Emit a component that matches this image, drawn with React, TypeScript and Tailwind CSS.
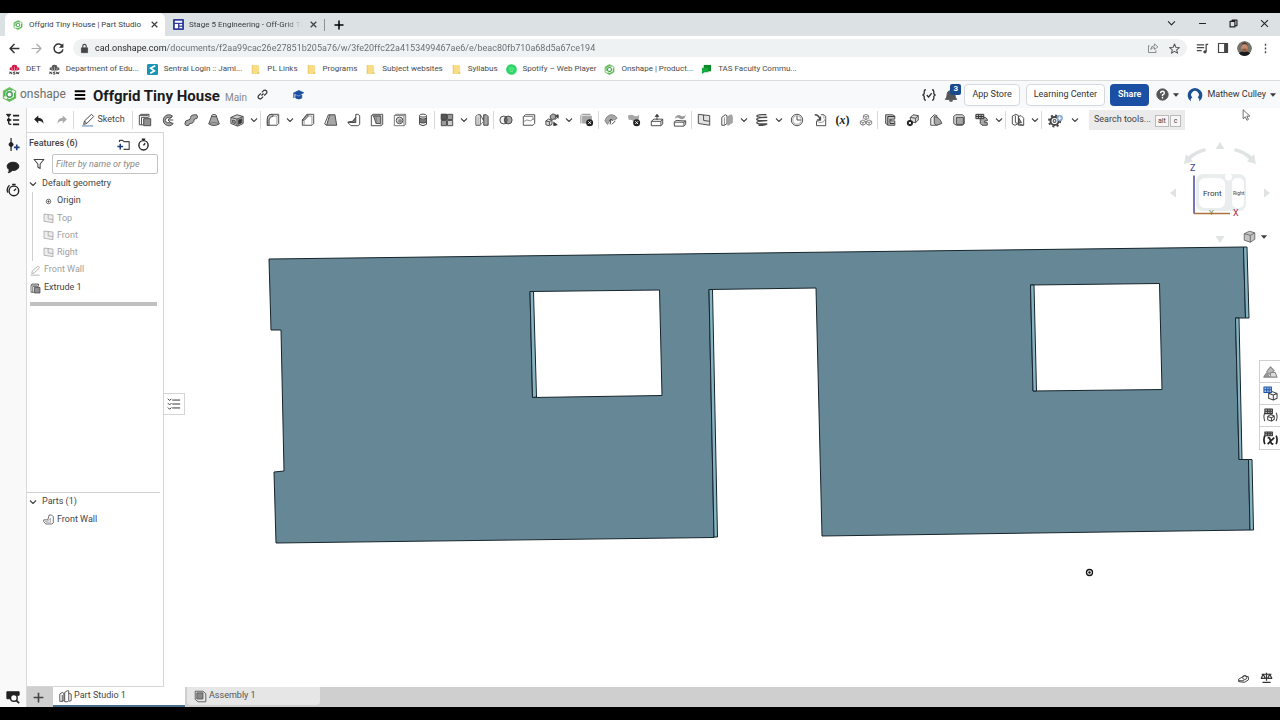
import { Fragment, useState } from "react";
import type { ReactNode } from "react";

interface IconProps {
  children: ReactNode;
  className?: string;
}

const Icon = ({ children, className = "size-[14px]" }: IconProps) => (
  <svg
    viewBox="0 0 16 16"
    className={`shrink-0 ${className}`}
    fill="none"
    stroke="currentColor"
    strokeWidth="1.1"
    strokeLinejoin="round"
    aria-hidden="true"
  >
    {children}
  </svg>
);

const Chevron = () => (
  <Icon className="size-2">
    <path d="M2 5l6 6 6-6" strokeWidth="2.2" />
  </Icon>
);

const Caret = () => (
  <Icon className="size-[6px]">
    <path d="M1 4h14l-7 8z" fill="currentColor" />
  </Icon>
);

const OnshapeMark = ({ className }: { className: string }) => (
  <svg viewBox="0 0 16 16" className={`shrink-0 ${className}`} fill="none" aria-hidden="true">
    <path d="M3 10V5l5-3 3 1.6M5 12.6l3 1.6 5.6-3V6" stroke="#4fb54a" strokeWidth="1.7" />
    <path d="M1.5 12V4.3L8 .8l6.5 3.500v7.400L8 15.300z" stroke="#6cc25f" strokeWidth="1.2" />
    <circle cx="8" cy="8" r="2.9" stroke="#3f9c4a" strokeWidth="1.5" />
  </svg>
);

const NswMark = ({ color }: { color: string }) => (
  <svg viewBox="0 0 12 12" className="size-[11px] shrink-0" aria-hidden="true">
    <path d="M.5 6Q.5 3 3 3.500 3 .8 6 .8t3 2.700q2.500-.5 2.500 2.500L9 7.200H3z" fill={color} />
    <path d="M3.500 6.500L3 4M6 6.500V3M8.500 6.500L9 4" stroke="#fff" strokeWidth=".5" />
    <path d="M1 11V8.500l2 2.500V8.500M6.800 8.700H5v1h1.500V11H4.500M8 8.500l.7 2.500.8-2 .7 2 .8-2.500" fill="none" stroke="#333" strokeWidth=".9" />
  </svg>
);

const FolderMark = () => (
  <svg viewBox="0 0 12 12" className="size-[11px] shrink-0" aria-hidden="true">
    <path d="M2 1h7l1 2v8H2z" fill="#f8dc86" />
    <path d="M2 1h1v10H2zM8 9h2v2H8z" fill="#e9c766" />
  </svg>
);

const bookmarks: { label: string; icon: ReactNode }[] = [
  { label: "DET", icon: <NswMark color="#d21447" /> },
  { label: "Department of Edu...", icon: <NswMark color="#555" /> },
  {
    label: "Sentral Login :: Jami...",
    icon: (
      <svg viewBox="0 0 12 12" className="size-[11px] shrink-0" aria-hidden="true">
        <rect width="12" height="12" rx="1.5" fill="#1b93b4" />
        <path d="M9 2L4 4.500 8 7.500 3.500 10" fill="none" stroke="#fff" strokeWidth="1.8" />
      </svg>
    ),
  },
  { label: "PL Links", icon: <FolderMark /> },
  { label: "Programs", icon: <FolderMark /> },
  { label: "Subject websites", icon: <FolderMark /> },
  { label: "Syllabus", icon: <FolderMark /> },
  {
    label: "Spotify – Web Player",
    icon: (
      <svg viewBox="0 0 12 12" className="size-[11px] shrink-0" aria-hidden="true">
        <circle cx="6" cy="6" r="5.8" fill="#2bd566" />
        <path d="M3 4.500q3-1 6 .5M3.500 6.500q2.500-.8 5 .4M4 8.300q2-.5 4 .4" fill="none" stroke="#8aeea9" strokeWidth=".8" />
      </svg>
    ),
  },
  { label: "Onshape | Product...", icon: <OnshapeMark className="size-[11px]" /> },
  {
    label: "TAS Faculty Commu...",
    icon: (
      <svg viewBox="0 0 12 12" className="size-[11px] shrink-0" aria-hidden="true">
        <path d="M3 1h8v7H3z" fill="#0b8a2c" />
        <path d="M1 4h7v5H4l-3 2z" fill="#14a83e" />
      </svg>
    ),
  },
];

const G = "#a6a6a6";

const toolIcons: Record<string, ReactNode> = {
  Extrude: (
    <>
      <path d="M1.500 3L3 1.500h9.500V5M1.500 3v10.500H6M1.500 3h9.500l1.500-1.500M4 5v8.500M4 5h8" />
      <path d="M6.500 6.500h8v8h-8z" fill="#8f8f8f" />
    </>
  ),
  Revolve: (
    <>
      <path d="M13 3.500A6.300 6.300 0 1 0 14 12l-4-1.500a3 3 0 1 1 0-4.500z" fill={G} />
      <path d="M8 8h6M8 8l5-4M8 8l4 4" />
    </>
  ),
  Sweep: (
    <path d="M1 12.500Q1 8 5 8q2.500 0 2.500-3Q7.500 2 13 2h1.500l1 2.500-1 2q-3-.5-3 1.500 0 4-5 4l-1 2-3 .5z" fill={G} />
  ),
  Loft: (
    <>
      <path d="M5.500 3L2 12.500Q8 16 14 12.500L10.500 3z" fill={G} />
      <ellipse cx="8" cy="3" rx="2.5" ry="1.3" fill="#ddd" />
      <path d="M2 12q6-2.500 12 0" stroke="#777" />
    </>
  ),
  Thicken: (
    <>
      <path d="M1 5l7-3 7 2v8l-6 3-8-3z" fill="#ccc" />
      <path d="M1 5l7 2 7-3M8 7v8" />
      <path d="M9.500 8l4-1.500V11l-4 2z" fill="#333" />
      <path d="M3 8l3 1v3l-3-1z" fill={G} />
    </>
  ),
  Fillet: (
    <>
      <path d="M1.500 14V7q0-5.500 5.500-5.500h7.500V12l-2 2z" />
      <path d="M1.500 7q0-5.500 5.500-5.500l1.500 2Q4 4 3.500 8V14h-2z" fill="#c4c4c4" />
      <path d="M8.500 3.500h4V14M12.500 3.500l2-2" stroke="#999" />
    </>
  ),
  Chamfer: (
    <>
      <path d="M1.500 14V8L7 1.500h7.500V12l-2 2z" />
      <path d="M1.500 8L7 1.500l1.500 2-5 5z" fill={G} />
      <path d="M3.500 8.500V14M8.500 3.500h4V14" stroke="#999" />
    </>
  ),
  Draft: (
    <>
      <path d="M6.500 2h6l2 12H3z" fill={G} />
      <path d="M3 14L.8 12.500 5 2h1.500" />
    </>
  ),
  Rib: (
    <>
      <path d="M10 1.500h2.500L14.500 3v10l-2 1.500h-8L1 11l5-1 4-4.500z" />
      <path d="M1 10.500l5.500-1L10 5v6z" fill="#777" />
    </>
  ),
  Shell: (
    <>
      <path d="M1.500 3L3 1.500h11.500V13l-2 1.500h-11z" />
      <path d="M4 3.500h8V12H7z" fill={G} />
      <path d="M1.500 3h11v11M7 5v7" stroke="#777" />
    </>
  ),
  Hole: (
    <>
      <path d="M1.500 3L3 1.500h11.500V13l-2 1.500h-11zM1.500 3h11v11.500M12.500 3l2-1.500" stroke="#777" />
      <circle cx="7.5" cy="8.5" r="3.8" fill="#ddd" />
      <circle cx="8" cy="9" r="2.2" fill="#888" stroke="none" />
    </>
  ),
  "External thread": (
    <>
      <path d="M4 3v10q4 3 8 0V3" fill="#eee" />
      <ellipse cx="8" cy="3" rx="4" ry="1.7" fill="#fff" />
      <path d="M4 6q4 2 8 0v4.500q-4 2-8 0z" fill="#777" />
    </>
  ),
  "Linear pattern": (
    <>
      <path d="M1.500 1.500h6v6h-6zM8.500 1.500h6v6h-6zM1.500 8.500h6v6h-6z" fill="#999" />
      <path d="M1.500 1.500h6v6h-6z" fill="#555" />
      <path d="M8.500 8.500h6v6h-6z" fill="#ccc" />
    </>
  ),
  Mirror: (
    <>
      <path d="M1 4l2-2h3v12H1zM6 2l4 7V2" />
      <path d="M10 2h3l2 2v10h-5z" fill={G} />
      <path d="M3.500 4v10M6 14l4-5" stroke="#888" />
    </>
  ),
  Boolean: (
    <>
      <circle cx="5.5" cy="8" r="4.5" fill="#f0f0f0" />
      <circle cx="10.5" cy="8" r="4.5" fill={G} />
      <path d="M8 4.200q3 3.800 0 7.600-3-3.800 0-7.600z" fill="#777" />
    </>
  ),
  Split: (
    <>
      <path d="M1.500 4L4 2h10.500v10L12.500 14h-11z" />
      <path d="M1.500 10l4-2 4 1 5-3M1.500 4h11v4" stroke="#888" />
    </>
  ),
  Transform: (
    <>
      <path d="M1 9l3-2 4 1v5l-3 1.500-4-1z" fill="#ddd" />
      <path d="M6 3l3-2 3 1v4L9 7.500 6 6z" fill={G} />
      <path d="M1 9l4 1 3-2M5 10v4M11 8l4-4" />
      <path d="M10 10.500v4l4-1zM15 2v4l-3-3z" fill="#333" />
    </>
  ),
  "Delete part": (
    <>
      <path d="M3 3.500h10v8H3z" fill={G} stroke={G} />
      <path d="M1 12V3l1.500-1.500H12" stroke="#888" />
      <circle cx="11" cy="11" r="4" fill="#222" stroke="none" />
      <path d="M9.500 9.500l3 3M12.500 9.500l-3 3" stroke="#fff" />
    </>
  ),
  "Modify fillet": (
    <>
      <path d="M1 9q2-7 8-7 4 0 6 4l-3 2Q8 6 6 10l-2 3z" fill={G} stroke="#888" />
      <path d="M7 13l1-6M8 7L6 9M8 7l2 2M9 13l4-4" />
    </>
  ),
  "Delete face": (
    <>
      <path d="M1 3q4-2 7 0 3 2 6-1l-1 8q-3 1-6-1T2 8z" fill={G} stroke="none" />
      <circle cx="11" cy="11" r="4" fill="#222" stroke="none" />
      <path d="M9.500 9.500l3 3M12.500 9.500l-3 3" stroke="#fff" />
    </>
  ),
  "Move face": (
    <>
      <path d="M1.500 9.500l3-2.500h10l-2 2.500zM1.500 9.500v5h11v-5M12.500 14.500l2-2V7" />
      <path d="M8 8V3M8 1.500L6 4h4z" fill="#222" />
    </>
  ),
  "Replace face": (
    <>
      <path d="M3 4q3-3 6-1t6-1l-2 4q-3 2-6 0T2 7z" fill="#999" stroke="none" />
      <path d="M1.500 10.500q1-2.500 4-2t9 .5v4l-2 2h-11zM1.500 10.500h11v4M12.500 10.500l2-1.500" />
    </>
  ),
  Plane: (
    <>
      <path d="M1.500 1.500l13 1.500v11l-13-2z" fill="#e2e2e2" />
      <path d="M7.500 2.200v6.300l7 1" />
    </>
  ),
  Frame: (
    <>
      <path d="M2 5l4-3 2 1v9l-3 2H2z" />
      <path d="M9 4l4-2 1 2v7l-5 3z" fill={G} stroke="#999" />
      <path d="M5 5v9" stroke="#888" />
    </>
  ),
  Helix: (
    <path d="M13 2Q2 1.500 2 3.500t12 1.500M14 5Q2 5 2 7.200t12 1.500M14 8.800Q2 9 2 11t12 1.500M14 12.500q-4 2-10 1.500" strokeWidth="1.5" />
  ),
  Curve: (
    <>
      <circle cx="8" cy="8" r="6.5" />
      <circle cx="8" cy="8" r="4.8" stroke="#aaa" />
      <path d="M8 3.500V8h4.500" />
    </>
  ),
  Import: (
    <>
      <path d="M4 9v5.500h10.500V4L12.500 2H9" />
      <path d="M2 2q5 0 6 6M8.500 4v4H4.500" strokeWidth="1.6" />
      <path d="M4 9l4 2 4-1 2.500-4M12.500 2v4" stroke="#999" />
    </>
  ),
  "Composite part": (
    <path
      d="M8 1.500l3 1.500v3L8 7.500 5 6V3zM4.500 8l3 1.500v3l-3 1.500-3-1.500v-3zM11.500 8l3 1.500v3l-3 1.500-3-1.500v-3zM5 3l3 1.500L11 3M8 4.500v3M1.500 9.500l3 1.500 3-1.500M4.500 11v3M8.500 9.500l3 1.500 3-1.500M11.500 11v3"
      stroke="#777"
      strokeWidth="1"
    />
  ),
  "Sheet metal": (
    <>
      <path d="M3 2h8l2.500 1.500V7H9v2h4.500v5H6l-3-2z" fill="#c8c8c8" />
      <path d="M5.500 4h8M5.500 4v10M8 6.500V12h5" stroke="#333" />
    </>
  ),
  Flange: (
    <>
      <path d="M5 5l3-3 6 1v5l-3 3-6-1z" fill="#ddd" />
      <path d="M5 5l6 1 3-3M11 6v5" />
      <circle cx="4.5" cy="11.5" r="3.5" fill="#222" stroke="none" />
      <path d="M3.300 10.300l2.400 2.400M5.700 10.300l-2.400 2.400" stroke="#fff" />
    </>
  ),
  Bend: (
    <>
      <path d="M2 14V6l4-4 3 1v11z" fill="#eee" />
      <path d="M6 4q7 1 8.500 8L9 14 6 12z" fill={G} />
    </>
  ),
  Tab: (
    <>
      <path d="M2 4l2-2h8l2 2v8l-2 2H5l-3-2z" fill="#ddd" />
      <path d="M5 5h8v8H5z" fill={G} />
    </>
  ),
  "Finish sheet metal": (
    <>
      <path d="M6 5h6l2 2v2h-3v2h3v3H8l-2-2z" fill={G} />
      <path d="M1 1.500h9v5H1zM1 4h9M4 1.500v5M7 1.500v5" fill="#bbb" stroke="#333" />
    </>
  ),
  "Flat view": (
    <>
      <path d="M1.500 3.500l4-2 3 1.500v9l-4 2-3-1.500z" />
      <path d="M8.500 4l3-1 3 3v8h-6zM5 3v8l9 3" />
      <path d="M9 6l3 5H9z" fill={G} />
    </>
  ),
};

const toolGroups: { tools: string[]; menus: string[] }[] = [
  { tools: ["Extrude", "Revolve", "Sweep", "Loft", "Thicken"], menus: ["Thicken"] },
  {
    tools: ["Fillet", "Chamfer", "Draft", "Rib", "Shell", "Hole", "External thread"],
    menus: ["Fillet"],
  },
  { tools: ["Linear pattern", "Mirror"], menus: ["Linear pattern"] },
  { tools: ["Boolean", "Split", "Transform", "Delete part"], menus: ["Transform"] },
  { tools: ["Modify fillet", "Delete face", "Move face", "Replace face"], menus: [] },
  {
    tools: ["Plane", "Frame", "Helix", "Curve", "Import", "Variable", "Composite part"],
    menus: ["Frame", "Helix"],
  },
  {
    tools: ["Sheet metal", "Flange", "Bend", "Tab", "Finish sheet metal"],
    menus: ["Finish sheet metal"],
  },
  { tools: ["Flat view"], menus: ["Flat view"] },
];

const Separator = () => <div className="h-[18px] w-px shrink-0 bg-[#d9d9d9]" />;

const BrowserTabs = () => (
  <div className="flex h-[23px] items-center bg-[#dce1e4] pl-[5px] text-[8px] text-[#3c4043]">
    <div className="flex h-full w-40 items-center rounded-t-md bg-white pr-[6px] pl-2">
      <OnshapeMark className="size-[10px]" />
      <span className="ml-[6px] whitespace-nowrap">Offgrid Tiny House | Part Studio</span>
      <button aria-label="Close tab" className="ml-auto">
        <Icon className="size-[9px]">
          <path d="M3 3l10 10M13 3L3 13" strokeWidth="2.2" />
        </Icon>
      </button>
    </div>
    <div className="flex h-full w-[159px] items-center pr-[6px] pl-2">
      <svg viewBox="0 0 12 12" className="size-[11px] shrink-0" aria-hidden="true">
        <rect width="12" height="12" rx="1" fill="#303f9f" />
        <path d="M2 2h8v2H2zM2 5.500h3.500V10H2zM7 5.500h3V7H7zM7 8.500h3V10H7z" fill="#fff" />
      </svg>
      <span className="ml-[5px] mask-r-from-85% whitespace-nowrap">
        Stage 5 Engineering - Off-Grid Ti
      </span>
      <button aria-label="Close tab" className="ml-auto">
        <Icon className="size-[9px]">
          <path d="M3 3l10 10M13 3L3 13" strokeWidth="2.2" />
        </Icon>
      </button>
    </div>
    <div className="h-3 w-px bg-[#8d9196]" />
    <button aria-label="New tab" className="ml-2 text-black">
      <Icon className="size-3">
        <path d="M8 2v12M2 8h12" strokeWidth="2" />
      </Icon>
    </button>
    <div className="ml-auto flex items-center gap-5 pr-[10px] pb-[3px] text-[#222]">
      <button aria-label="Search tabs">
        <Icon className="size-[11px]">
          <path d="M3 5l5 5 5-5" strokeWidth="1.5" />
        </Icon>
      </button>
      <button aria-label="Minimize">
        <Icon className="size-[11px]">
          <path d="M3 8h10" strokeWidth="1.5" />
        </Icon>
      </button>
      <button aria-label="Restore">
        <Icon className="size-[11px]">
          <path d="M3 5h7v8H3zM6 5V3h7v8h-3" strokeWidth="1.7" />
        </Icon>
      </button>
      <button aria-label="Close">
        <Icon className="size-[11px]">
          <path d="M3 3l10 10M13 3L3 13" strokeWidth="1.5" />
        </Icon>
      </button>
    </div>
  </div>
);

const AddressBar = () => (
  <div className="flex h-6 items-center bg-white pr-[9px] pl-2 text-[#444]">
    <div className="flex gap-[9px]">
      <button aria-label="Back" className="text-[#333]">
        <Icon className="size-[13px]">
          <path d="M14 8H2.500M8 2.500L2.500 8 8 13.500" strokeWidth="1.8" />
        </Icon>
      </button>
      <button aria-label="Forward" className="text-[#aaa]">
        <Icon className="size-[13px]">
          <path d="M2 8h11.500M8 2.500L13.500 8 8 13.500" strokeWidth="1.5" />
        </Icon>
      </button>
      <button aria-label="Reload" className="text-[#333]">
        <Icon className="size-[13px]">
          <path d="M13 5.500A5.500 5.500 0 1 0 13.500 9" strokeWidth="1.8" />
          <path d="M14 1.500V7H8.500z" fill="currentColor" stroke="none" />
        </Icon>
      </button>
    </div>
    <div className="ml-2 flex h-[18px] grow items-center rounded-full bg-[#eff2f3] px-[6px]">
      <Icon className="size-[11px]">
        <path d="M3.500 7h9v7h-9z" fill="currentColor" />
        <path d="M5.500 7V4.500a2.500 2.500 0 0 1 5 0V7" strokeWidth="1.6" />
      </Icon>
      <input
        aria-label="Address"
        defaultValue="cad.onshape.com/documents/f2aa99cac26e27851b205a76/w/3fe20ffc22a4153499467ae6/e/beac80fb710a68d5a67ce194"
        className="ml-[5px] min-w-0 grow bg-[linear-gradient(to_right,#202124_72px,#64686c_72px)] bg-clip-text pt-px text-[9px] text-transparent caret-black outline-none"
      />
      <button aria-label="Share this page" className="text-[#777]">
        <Icon className="size-3">
          <path d="M3.500 5H2v9h10v-3" />
          <path d="M5 10q0-5 5-5V2.500L14.500 6.500 10 10V7.500Q7 7.500 5 10z" />
        </Icon>
      </button>
      <button aria-label="Bookmark this page" className="mr-[1px] ml-[10px] text-[#555]">
        <Icon className="size-[11px]">
          <path d="M8 1.500l2 4.700 5 .4-3.800 3.300 1.200 4.900L8 12.200l-4.400 2.600 1.200-4.900L1 6.600l5-.4z" strokeWidth="1.5" />
        </Icon>
      </button>
    </div>
    <div className="ml-[9px] flex items-center gap-2">
      <button aria-label="Media controls">
        <Icon className="size-[13px]">
          <path d="M1 3.500h9M1 7h9M1 10.500h6" strokeWidth="1.5" />
          <path d="M12.500 12V3H15" strokeWidth="1.5" />
          <circle cx="11" cy="12" r="2" fill="currentColor" stroke="none" />
        </Icon>
      </button>
      <button aria-label="Side panel">
        <Icon className="size-3">
          <path d="M2 2h12v12H2z" strokeWidth="1.6" />
          <path d="M10 2h4v12h-4z" fill="currentColor" />
        </Icon>
      </button>
      <button aria-label="Profile">
        <svg viewBox="0 0 16 16" className="size-[15px] rounded-full" aria-hidden="true">
          <circle cx="8" cy="8" r="8" fill="#75746a" />
          <path d="M2 14q1-3 6-3t6 3q-2.500 2-6 2t-6-2z" fill="#17191c" />
          <ellipse cx="8" cy="7" rx="3.3" ry="4.7" fill="#c48a70" />
          <path d="M4.700 5.500Q4.700 1.500 8 1.500t3.300 4L10 3.500H6z" fill="#4b352a" />
          <path d="M5.500 8.500Q8 7.500 10.500 8.500 10 12 8 12T5.500 8.500z" fill="#8b5a45" />
        </svg>
      </button>
      <button aria-label="Browser menu">
        <Icon className="size-[11px]">
          <path d="M7 1h2v3H7zM7 6.500h2v3H7zM7 12h2v3H7z" fill="currentColor" stroke="none" />
        </Icon>
      </button>
    </div>
  </div>
);

const Bookmarks = () => (
  <nav className="flex h-[21px] items-center gap-2 border-b border-[#dcdcdc] bg-white pb-[2px] pl-[9px] text-[8px] text-[#4a4a4a]">
    {bookmarks.map((bookmark) => (
      <a key={bookmark.label} href="#" className="flex items-center gap-[6px] whitespace-nowrap">
        {bookmark.icon}
        {bookmark.label}
      </a>
    ))}
  </nav>
);

const Header = () => (
  <header className="flex h-[27px] items-center bg-[#f8f9fb] pr-1 pl-[2px] text-[#333]">
    <a href="#" className="flex items-center text-[12px] text-[#6e6e6e]">
      <OnshapeMark className="size-[15px]" />
      <span className="ml-[3px] w-[50px] pb-px leading-4">onshape</span>
    </a>
    <button aria-label="Main menu" className="ml-1 text-black">
      <Icon className="size-3">
        <path d="M1 3h14M1 8h14M1 13h14" strokeWidth="2.4" />
      </Icon>
    </button>
    <h1 className="ml-[7px] pt-[2px] text-[15px] leading-5 font-bold whitespace-nowrap text-[#1b1b1b]">
      Offgrid Tiny House
    </h1>
    <span className="ml-[5px] pt-[5px] text-[10px] text-[#888]">Main</span>
    <button aria-label="Copy link" className="ml-[10px]">
      <Icon className="size-[11px]">
        <path d="M6.500 9.500l3-3M7 5l3-3q2-1 3.500.5T14 6l-3.500 3.500M9 11l-3 3q-2 1-3.500-.5T2 10l3.500-3.500" strokeWidth="1.7" />
      </Icon>
    </button>
    <button aria-label="Learning" className="ml-6 text-[#1c4f9f]">
      <Icon className="size-3">
        <path d="M2 5.500L9 2l6.500 3L9 8.500z" fill="currentColor" />
        <path d="M5 8.500V12q4 2.500 8 0V8L9 10z" fill="currentColor" />
        <path d="M2.500 6v6" strokeWidth="1.5" />
      </Icon>
    </button>
    <div className="ml-auto flex items-center text-[9px]">
      <button aria-label="Feature script">
        <Icon className="size-[14px]">
          <path d="M4.500 2Q2.500 2 2.500 4v2.500L1 8l1.500 1.500V12q0 2 2 2M11.500 2q2 0 2 2v2.500L15 8l-1.500 1.500V12q0 2-2 2M5.500 8l2 2.500 3.500-4.500" strokeWidth="1.5" />
        </Icon>
      </button>
      <button aria-label="3 notifications" className="relative ml-2 text-[#555]">
        <Icon className="size-[14px]">
          <path d="M1.500 13q2-2 2-5 0-5 4.500-5t4.500 5q0 3 2 5zM6.500 14h3v1h-3z" fill="currentColor" />
        </Icon>
        <span className="absolute -top-[4px] left-[6px] grid size-[11px] place-items-center rounded-xs bg-[#1a4a8e] text-[8px] leading-none font-bold text-white">
          3
        </span>
      </button>
      <button className="ml-[6px] h-[22px] rounded border border-[#d5d8dc] bg-white px-[7px]">App Store</button>
      <button className="ml-[6px] h-[22px] rounded border border-[#d5d8dc] bg-white px-[7px]">Learning Center</button>
      <button className="ml-[5px] h-[22px] rounded bg-[#1b4fa3] px-2 font-semibold text-white">Share</button>
      <button aria-label="Help" className="ml-[7px] flex items-center gap-1">
        <Icon className="size-[13px] text-[#555]">
          <circle cx="8" cy="8" r="7" fill="currentColor" />
          <path d="M5.700 6.500q0-2.500 2.300-2.500t2.300 2Q10.300 7.500 8 8.500V10M8 11v2" stroke="#fff" strokeWidth="1.7" />
        </Icon>
        <Caret />
      </button>
      <button className="ml-2 flex items-center gap-1 whitespace-nowrap">
        <Icon className="size-4 text-[#1b5091]">
          <path d="M4 14.500a7.300 7.300 0 1 1 8 0q1-3-1.300-4a3.800 3.800 0 1 0-5.400 0Q3 11.500 4 14.500z" fill="currentColor" stroke="none" />
        </Icon>
        Mathew Culley
        <Caret />
      </button>
    </div>
  </header>
);

const Toolbar = () => (
  <div className="flex h-6 items-center bg-white text-[#4a4a4a]">
    <button aria-label="Undo" className="grid w-[23px] place-items-center text-[#222]">
      <Icon className="size-3">
        <path d="M7 2v3q7 0 7 8-2-4-7-4v3.500L1.500 7z" fill="currentColor" stroke="none" />
      </Icon>
    </button>
    <button aria-label="Redo" className="grid w-[23px] place-items-center text-[#aaa]">
      <Icon className="size-3">
        <path d="M9 2v3q-7 0-7 8 2-4 7-4v3.500L14.500 7z" fill="currentColor" stroke="none" />
      </Icon>
    </button>
    <Separator />
    <button className="flex w-[58px] items-center justify-center gap-[2px] text-[9px] text-[#444]">
      <Icon>
        <path d="M3 13l1-4 8-7.500L14.500 4l-8 8zM4 9l2.500 3" />
        <path d="M1 14.800h13" stroke="#4d7cb5" />
      </Icon>
      Sketch
    </button>
    <Separator />
    {toolGroups.map((group) => (
      <Fragment key={group.tools[0]}>
        {group.tools.map((tool) => (
          <Fragment key={tool}>
            <button aria-label={tool} className="grid w-[23px] place-items-center">
              {tool === "Variable" ? (
                <span className="font-['Liberation_Serif',serif] text-[12px] leading-4 font-bold text-[#222]">
                  (<i>x</i>)
                </span>
              ) : (
                <Icon>{toolIcons[tool]}</Icon>
              )}
            </button>
            {group.menus.includes(tool) && (
              <button aria-label={`${tool} menu`} className="grid w-3 place-items-center">
                <Chevron />
              </button>
            )}
          </Fragment>
        ))}
        <Separator />
      </Fragment>
    ))}
    <button aria-label="Custom features" className="grid w-[27px] place-items-center">
      <Icon className="size-[15px]">
        <circle cx="7" cy="8.5" r="4.3" strokeWidth="2" stroke="#444" />
        <circle cx="7" cy="8.5" r="6" strokeWidth="2" strokeDasharray="2.2 2.5" stroke="#444" />
        <circle cx="7" cy="8.5" r="1.5" />
        <circle cx="12.5" cy="5.5" r="3.3" fill="#7ea2cf" stroke="none" />
        <path d="M12.500 3.500v4M10.500 5.500h4" stroke="#fff" />
      </Icon>
    </button>
    <button aria-label="Custom features menu" className="grid w-3 place-items-center">
      <Chevron />
    </button>
    <button className="ml-2 flex h-5 w-24 items-center gap-1 bg-[#ebebeb] pl-[5px] text-[9px] whitespace-nowrap text-[#444]">
      Search tools...
      <span className="flex pt-px text-[7px] leading-[10px]">
        <kbd className="border border-[#bbb] bg-[#f6f6f6] px-[2px] font-['Roboto',sans-serif]">alt</kbd>
        <kbd className="ml-px border border-[#bbb] bg-[#f6f6f6] px-[3px] font-['Roboto',sans-serif]">c</kbd>
      </span>
    </button>
  </div>
);

const PlaneIcon = () => (
  <Icon className="size-[11px]">
    <path d="M1.500 1.500l13 1.500v11l-13-2z" fill="#eee" />
    <path d="M7.500 2.200v6.300l7 1" />
  </Icon>
);

const FeaturePanel = () => {
  const [filter, setFilter] = useState("");

  return (
    <aside className="flex w-[137px] shrink-0 flex-col border-t border-r border-b border-[#d6d6d6] bg-white text-[9px] text-[#444]">
      <div className="flex h-5 items-center pt-[2px] pr-[13px] pl-[2px]">
        <h2 className="font-medium">Features (6)</h2>
        <button aria-label="New folder" className="ml-auto">
          <Icon className="size-[13px]">
            <path d="M3 5V3h4l1.500 1.500H15V14H8" strokeWidth="1.4" />
            <path d="M4 7v7M.5 10.500h7" stroke="#1d3e78" strokeWidth="1.8" />
          </Icon>
        </button>
        <button aria-label="Regeneration times" className="ml-[7px] text-[#222]">
          <Icon className="size-[13px]">
            <circle cx="8" cy="9" r="5.7" strokeWidth="1.7" />
            <path d="M6 1.500h4M8 9l2-2.500" strokeWidth="1.7" />
          </Icon>
        </button>
      </div>
      <div className="flex h-[22px] items-center pr-[5px] pl-[6px]">
        <Icon className="size-3">
          <path d="M1.500 2h13L9.500 8v6L6.500 12V8z" strokeWidth="1.4" />
        </Icon>
        <input
          aria-label="Filter features"
          value={filter}
          onChange={(event) => setFilter(event.target.value)}
          placeholder="Filter by name or type"
          className="ml-[7px] h-5 min-w-0 grow rounded-xs border border-[#c4c4c4] px-[3px] text-[9px] outline-none placeholder:text-[#888] placeholder:italic"
        />
      </div>
      <button className="flex h-[17px] items-center gap-1 pl-[2px]">
        <Chevron />
        <span className="pl-[1px]">Default geometry</span>
      </button>
      <ul className="ml-[5px] border-l border-[#d2d2d2] pl-[10px]">
        <li className="flex h-[18px] items-center gap-[3px]">
          <Icon className="size-[11px]">
            <circle cx="8" cy="8" r="3.3" />
            <circle cx="8" cy="8" r="1" fill="currentColor" />
          </Icon>
          Origin
        </li>
        {["Top", "Front", "Right"].map((plane) => (
          <li key={plane} className="flex h-[17px] items-center gap-[3px] text-[#a0a0a0]">
            <PlaneIcon />
            {plane}
          </li>
        ))}
      </ul>
      <ul className="pl-[3px]">
        <li className="flex h-[18px] items-center gap-[3px] text-[#a0a0a0]">
          <Icon className="size-[11px]">
            <path d="M2.500 12.500l1-4 8-7L14 4l-8 7.500zM1 14.800h13" />
          </Icon>
          Front Wall
        </li>
        <li className="flex h-[18px] items-center gap-[3px]">
          <Icon className="size-[11px]">{toolIcons.Extrude}</Icon>
          Extrude 1
        </li>
      </ul>
      <div className="mt-[5px] mr-[6px] ml-[3px] h-1 bg-[#c0c0c0]" />
      <section className="mt-auto mr-[3px] h-[194px] border-t border-[#d0d0d0]">
        <button className="flex h-[18px] items-center gap-1 pl-[2px]">
          <Chevron />
          <span className="pl-[1px]">Parts (1)</span>
        </button>
        <div className="flex h-[17px] items-center gap-[3px] pl-4">
          <Icon className="size-[11px]">
            <path d="M9 1.500h3.500L15 4v9l-2 1.500H4L1 11V8.500h6z" />
            <path d="M3.500 11l4.500-1 3-4v6H5z" stroke="#999" />
          </Icon>
          Front Wall
        </div>
      </section>
    </aside>
  );
};

const WallModel = () => (
  <svg viewBox="164 132 1116 555" className="size-full" aria-label="Front wall part">
    <g stroke="#16252c" strokeWidth="1" strokeLinejoin="round">
      <path
        d="M269 259L1243.500 247 1245.500 318 1235.500 318 1239 459.500 1248.500 459.500 1250 530 822 536 816 288 709 289.500 714 537.500 276 543 274 472 284 471 281 330 271 330z"
        fill="#668795"
      />
      <path d="M1243.500 247h3.500l2 71h-3.500z" fill="#87b4c4" />
      <path d="M1235.500 318h3.500l3 141.500h-3z" fill="#87b4c4" />
      <path d="M1248.500 459.500h3.500l1.500 70.500h-3.500z" fill="#87b4c4" />
      <path d="M709 289.500h3.500l5 247.500h-3.500z" fill="#87b4c4" />
      <path d="M530 291.500L659.500 290 662 395.500 532.500 397.500z" fill="#fff" />
      <path d="M530 291.500h3.500l3 105.500-4 .5z" fill="#87b4c4" />
      <path d="M1030.500 285L1159.500 283.500 1162 389.500 1033 391z" fill="#fff" />
      <path d="M1030.500 285h3.500l2.500 106h-3.500z" fill="#87b4c4" />
    </g>
    <circle cx="1089.5" cy="572.5" r="3" fill="#fff" stroke="#111" strokeWidth="1.3" />
    <circle cx="1089.5" cy="572.5" r="1.2" fill="#111" />
  </svg>
);

const ViewCube = () => (
  <svg
    viewBox="1165 138 110 110"
    className="absolute top-[6px] right-[5px] size-[110px] font-['Roboto',sans-serif]"
    aria-label="View cube"
  >
    <g fill="#dfe3e3">
      <path d="M1215.500 149h9l-4.500-7zM1215.500 236h9l-4.500 7zM1176 188.500v9l-6-4.500zM1264 188.500v9l6-4.500z" />
      <path d="M1184 164l2-10 2 2.500q7-6 17-8.500l1 3q-9 2.500-15 8l2 2.500zM1256 164l-2-10-2 2.500q-7-6-17-8.500l-1 3q9 2.500 15 8l-2 2.500z" />
    </g>
    <rect x="1196" y="174" width="50" height="37" rx="7" fill="#e9edee" />
    <rect x="1199" y="178" width="26" height="30" rx="6" fill="#fff" />
    <rect x="1232" y="178" width="12" height="30" rx="5" fill="#fff" />
    <circle cx="1228.5" cy="177" r="3.5" fill="#fff" />
    <path d="M1194 213.500h36" stroke="#b0713c" strokeWidth="1.3" />
    <path d="M1194 213.500v-38" stroke="#4a4a9c" strokeWidth="1.5" />
    <text x="1203" y="196" fontSize="8" fill="#333">Front</text>
    <text x="1233" y="195" fontSize="5" fill="#444">Right</text>
    <text x="1190" y="171" fontSize="9" fill="#3c3c96">Z</text>
    <text x="1209" y="215" fontSize="8" fill="#6f8a45">Y</text>
    <text x="1233" y="216" fontSize="9" fill="#a82c46">X</text>
  </svg>
);

const tableTools: { label: string; icon: ReactNode }[] = [
  {
    label: "Appearance",
    icon: (
      <g stroke="#888">
        <path d="M1 13.500l3-4 3 4.500H1z" fill="#999" />
        <path d="M4 8l4-5 4 4-5 4z" fill="#bbb" />
        <path d="M8 9h5l2 5H8z" fill="#ddd" />
      </g>
    ),
  },
  {
    label: "Configurations",
    icon: (
      <>
        <path d="M6 8l4-2 5 2v5l-4 2-5-2zM6 8l5 1.500L15 8M11 9.500V15" fill="#fff" />
        <path d="M1 1h8v6H1zM1 4h8M4 1v6M6.500 1v6" fill="#a9c4e6" stroke="#1f57a8" />
      </>
    ),
  },
  {
    label: "Configured parts",
    icon: (
      <>
        <path d="M2 5q-2 4 0 9M14 5q2 4 0 9M5 9l3-2 4 1.500V12l-3 2-4-1.500zM5 9l4 1.500 3-2M9 10.500V14" />
        <path d="M2 1h8v5H2zM2 3.500h8M5 1v5M7.500 1v5" fill="#bbb" stroke="#333" />
      </>
    ),
  },
  {
    label: "Variables",
    icon: (
      <>
        <path d="M2 5q-2 4 0 9M14 5q2 4 0 9M5 7l2 .5 2 6 2 .5M12 7L5 14" strokeWidth="1.8" stroke="#222" />
        <path d="M2 1h8v4H2zM2 3h8M5 1v4M7.500 1v4" fill="#bbb" stroke="#333" />
      </>
    ),
  },
];

const Viewport = () => (
  <main className="relative min-w-0 grow bg-white">
    <WallModel />
    <ViewCube />
    <button
      aria-label="Feature list"
      className="absolute top-[261px] -left-px grid size-[22px] place-items-center border border-[#d4d4d4] bg-white text-[#333]"
    >
      <Icon>
        <path d="M6 3.500h9M6 8h9M6 12.500h9M1 2l2 2 2-2M1 7l2 2 2-2M1 12l2 2 2-2" />
      </Icon>
    </button>
    <button
      aria-label="View options"
      className="absolute top-[98px] right-[13px] flex items-center gap-[5px] text-[#333]"
    >
      <Icon className="size-[13px]">
        <path d="M1.500 4.500L8 1.500l6.500 2v8L9 15l-7.500-2.500z" fill="#c4c4c4" stroke="#666" />
        <path d="M1.500 4.500L9 6.500l5.500-3M9 6.500V15" stroke="#666" />
      </Icon>
      <Caret />
    </button>
    <div className="absolute top-[228px] right-0 grid divide-y divide-[#d0d0d0] border border-r-0 border-[#d0d0d0] bg-white text-[#444]">
      {tableTools.map((tool) => (
        <button key={tool.label} aria-label={tool.label} className="grid h-[22px] w-5 place-items-center">
          <Icon className="size-[15px]">{tool.icon}</Icon>
        </button>
      ))}
    </div>
    <div className="absolute right-[7px] bottom-[3px] flex gap-[10px] text-[#333]">
      <button aria-label="Measure">
        <Icon className="size-[13px]">
          <path d="M2 10l7-4 5 1v4l-5 3-7-1z" />
          <circle cx="9.5" cy="8" r="2.5" />
          <path d="M2 12h7" />
        </Icon>
      </button>
      <button aria-label="Mass properties">
        <Icon className="size-[13px]">
          <path d="M2 4h12M8 2v10M3 14h10M4 4L1.500 9h5zM12 4L9.500 9h5z" strokeWidth="1.5" />
        </Icon>
      </button>
    </div>
  </main>
);

const LeftRail = () => (
  <nav className="flex w-[27px] shrink-0 flex-col items-center border-r border-[#dadada] bg-[#f9f9fa] text-[#222]">
    <button aria-label="Feature tree" className="grid h-6 place-items-center">
      <Icon>
        <path d="M8 3h7M8 8h7M8 13h7" strokeWidth="1.8" />
        <path d="M3 5v6q0 2 3 2M3 8h3" strokeWidth="1.5" />
        <path d="M.5 1.500h5L3 4.500z" fill="currentColor" />
        <circle cx="3" cy="8" r="1.5" fill="currentColor" />
      </Icon>
    </button>
    <button aria-label="Insert" className="grid h-6 place-items-center">
      <Icon className="size-[13px]">
        <path d="M5 0v3M5 13v3M5 3v10" strokeWidth="1.5" />
        <circle cx="5" cy="8" r="2.5" fill="currentColor" />
        <path d="M12 8v7M8.500 11.500h7" stroke="#1d3e78" strokeWidth="2" />
      </Icon>
    </button>
    <button aria-label="Comments" className="grid h-[22px] place-items-center">
      <Icon>
        <path d="M8 2.500c4 0 6.700 2 6.700 4.700S12 12 8 12H7q-1.500 2-4.500 2.500Q4 13 3.500 11 1.300 9.500 1.300 7.200C1.300 4.500 4 2.500 8 2.500z" fill="currentColor" />
      </Icon>
    </button>
    <button aria-label="History" className="grid h-6 place-items-center">
      <Icon>
        <circle cx="9" cy="9" r="5.5" strokeWidth="1.6" />
        <path d="M7 1.500h4M9 9l2.500-2.500M4 2.500Q0 6 2 11" strokeWidth="1.5" />
      </Icon>
    </button>
    <button aria-label="Search tabs" className="mt-auto grid h-5 place-items-center">
      <Icon>
        <path d="M1 2h14v4H5v4H1z" fill="currentColor" />
        <circle cx="9" cy="9" r="3.8" fill="#fff" strokeWidth="1.6" />
        <path d="M11.500 11.500l3.500 3.500" strokeWidth="2" />
      </Icon>
    </button>
  </nav>
);

const DocumentTabs = () => (
  <div className="flex h-5 bg-[#cfcfcf] text-[9px] text-[#444]">
    <button aria-label="Add tab" className="grid w-[26px] place-items-center pr-1 text-[#444]">
      <Icon className="size-[13px]">
        <path d="M8 2v12M2 8h12" strokeWidth="2" />
      </Icon>
    </button>
    <button className="flex w-[132px] items-center gap-[2px] border-b-2 border-[#4a6f8c] bg-white pl-[6px]">
      <Icon className="size-[13px]">
        <path d="M1 5l3-2 2 1v9l-2 1H1zM4 6v8M7 3l3-2h2v12l-2 1.500H7zM12 4l3 1v8l-3 1" />
      </Icon>
      Part Studio 1
    </button>
    <button className="mb-[2px] ml-[2px] flex w-[133px] items-center gap-[2px] rounded-b bg-[#e6e6e6] pl-[7px] text-[#555]">
      <Icon className="size-[13px]">
        <path d="M1.500 1.500H11l3.500 3v10H5l-3.500-3z" />
        <path d="M3.500 3.500H11V11H3.500z" fill="#888" />
      </Icon>
      Assembly 1
    </button>
  </div>
);

const App = () => (
  <div className="flex h-screen flex-col overflow-hidden bg-black py-[13px] font-['Roboto',sans-serif]">
    <BrowserTabs />
    <AddressBar />
    <Bookmarks />
    <div className="relative">
      <Header />
      <svg
        viewBox="0 0 12 16"
        className="absolute top-[27px] right-[29px] h-[14px] w-[9px]"
        aria-hidden="true"
      >
        <path d="M1.500 1v12l3-2.500 2 4.500 2-1-2-4.500h4z" fill="#fff" stroke="#444" />
      </svg>
    </div>
    <div className="flex min-h-0 grow">
      <LeftRail />
      <div className="flex min-w-0 grow flex-col">
        <Toolbar />
        <div className="flex min-h-0 grow">
          <FeaturePanel />
          <Viewport />
        </div>
        <DocumentTabs />
      </div>
    </div>
  </div>
);

export default App;
